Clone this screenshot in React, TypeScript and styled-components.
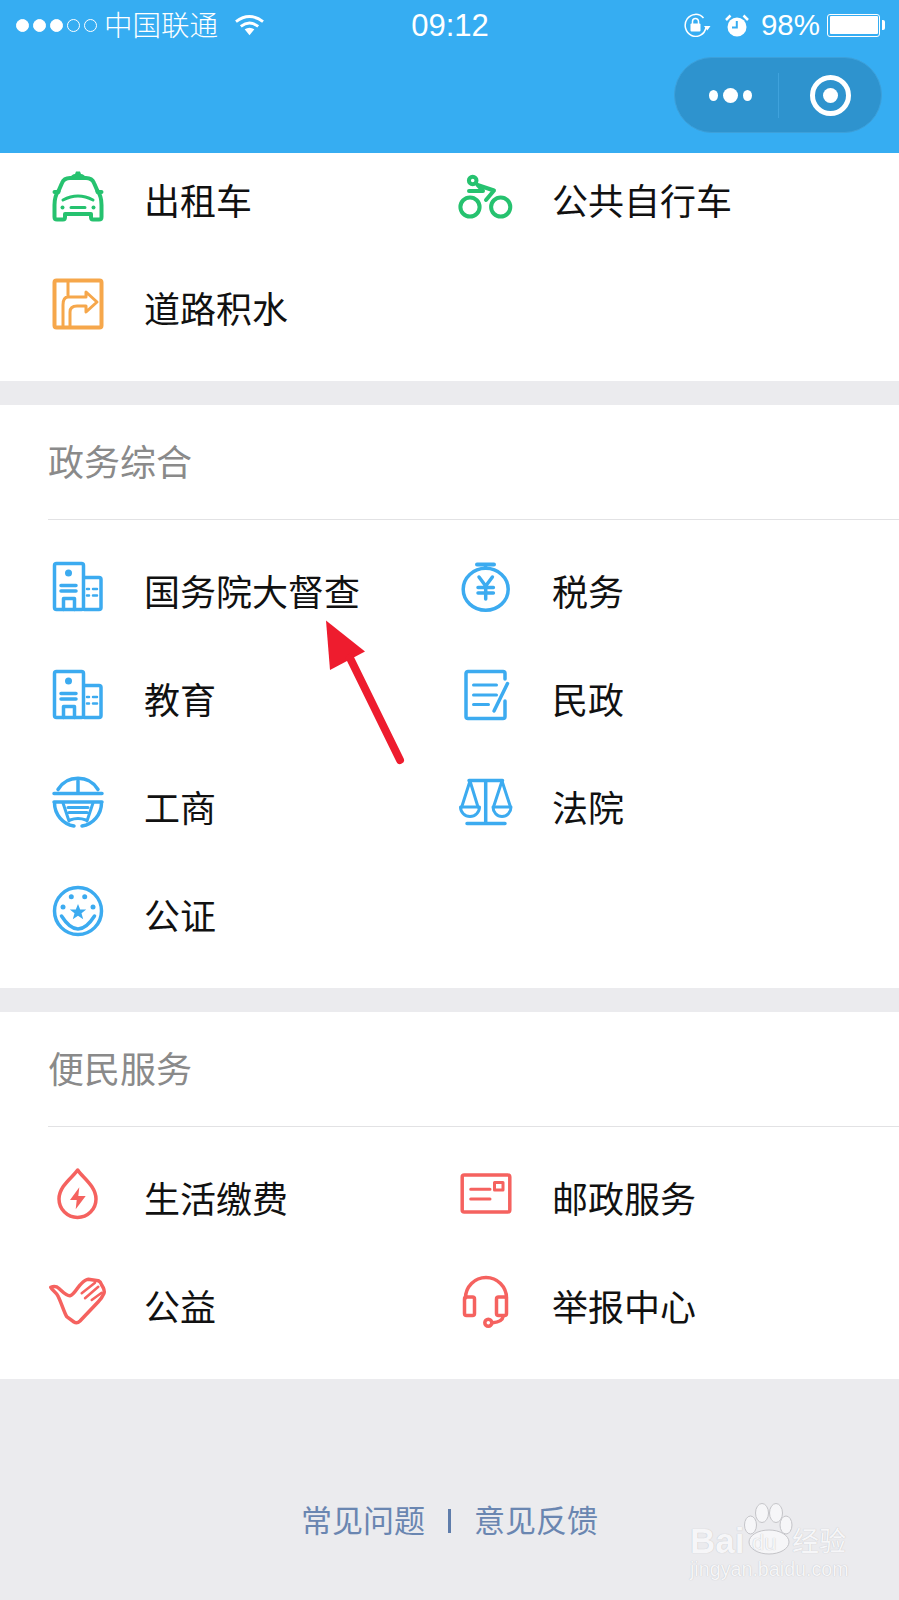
import React from "react";
import styled, { createGlobalStyle } from "styled-components";

const GlobalStyle = createGlobalStyle`
  html, body {
    margin: 0;
    padding: 0;
    background: #ebebee;
  }
`;

const cjk = `"Noto Sans CJK SC", "Liberation Sans", sans-serif`;

const Page = styled.div`
  position: relative;
  width: 899px;
  height: 1600px;
  overflow: hidden;
  background: #ebebee;
  font-family: ${cjk};
`;

const Header = styled.header`
  height: 153px;
  background: #36adf2;
  color: #fff;
  display: flex;
  flex-direction: column;
`;

const StatusBar = styled.div`
  height: 50px;
  padding: 0 19px 0 16px;
  display: grid;
  grid-template-columns: 1fr auto 1fr;
  align-items: center;
`;

const StatusLeft = styled.div`
  display: flex;
  align-items: center;
`;

const StatusRight = styled.div`
  display: flex;
  align-items: center;
  justify-content: flex-end;
`;

const SignalDot = styled.span<{ $on: boolean }>`
  width: 13px;
  height: 13px;
  margin-right: 4px;
  box-sizing: border-box;
  border-radius: 50%;
  border: 1px solid #fff;
  background: ${(p) => (p.$on ? "#fff" : "transparent")};
`;

const Carrier = styled.span`
  font-size: 28.5px;
  font-weight: 300;
  margin: -2px 17px 0 3px;
  line-height: 36px;
`;

const Clock = styled.span`
  font-family: "Liberation Sans", sans-serif;
  font-size: 31px;
  margin: 2px 0 0 4px;
`;

const LockSlot = styled.span`
  margin-right: 14px;
  display: flex;
`;

const Percent = styled.span`
  font-family: "Liberation Sans", sans-serif;
  font-size: 29.5px;
  margin: 0 7px 0 12px;
`;

const Battery = styled.span`
  width: 53px;
  height: 23px;
  box-sizing: border-box;
  border: 1.5px solid #fff;
  border-radius: 3px;
  padding: 1.5px;
  display: flex;
  position: relative;

  &::before {
    content: "";
    flex: 1;
    background: #fff;
    border-radius: 1px;
  }

  &::after {
    content: "";
    position: absolute;
    right: -6px;
    top: 5px;
    width: 3px;
    height: 10px;
    background: #fff;
    border-radius: 0 2px 2px 0;
  }
`;

const NavRow = styled.div`
  display: flex;
  justify-content: flex-end;
  padding: 7px 17px 0 0;
`;

const Capsule = styled.div`
  width: 208px;
  height: 76px;
  box-sizing: border-box;
  border-radius: 38px;
  background: #2e93ce;
  border: 1px solid #3da0da;
  display: flex;
  align-items: center;
`;

const MoreButton = styled.div`
  width: 103px;
  padding-left: 7px;
  box-sizing: border-box;
  display: flex;
  align-items: center;
  justify-content: center;
  gap: 5px;
`;

const MoreDot = styled.span<{ $big?: boolean }>`
  width: ${(p) => (p.$big ? 15 : 9)}px;
  height: ${(p) => (p.$big ? 15 : 11)}px;
  border-radius: 50%;
  background: #fff;
`;

const CapsuleDivider = styled.span`
  width: 1px;
  height: 45px;
  background: #3fa2dc;
`;

const CloseButton = styled.div`
  flex: 1;
  display: flex;
  justify-content: center;
  align-items: center;
`;

const CloseRing = styled.span`
  width: 41px;
  height: 41px;
  box-sizing: border-box;
  border: 5px solid #fff;
  border-radius: 50%;
  display: flex;
  align-items: center;
  justify-content: center;

  &::after {
    content: "";
    width: 15px;
    height: 15px;
    border-radius: 50%;
    background: #fff;
  }
`;

const Section = styled.section`
  background: #fff;
  overflow: hidden;
  padding-bottom: 18px;
  margin-bottom: 24px;
`;

const SectionTitle = styled.h2`
  margin: 0 0 0 48px;
  height: 110px;
  padding-bottom: 4px;
  border-bottom: 1px solid #e2e2e4;
  display: flex;
  align-items: center;
  font-size: 36px;
  font-weight: 400;
  color: #8a8a8a;
`;

const Grid = styled.div<{ $scrolled?: boolean }>`
  display: grid;
  grid-template-columns: 408px 1fr;
  grid-auto-rows: 108px;
  padding-left: 48px;
  margin-top: ${(p) => (p.$scrolled ? -6 : 18)}px;
`;

const Item = styled.div`
  display: flex;
  align-items: center;
`;

const IconBox = styled.span`
  width: 60px;
  height: 50px;
  margin: 0 36px 10px 0;
  display: flex;
  justify-content: center;
`;

const Icon = styled.svg<{ $color: string; $weight?: number }>`
  width: 50px;
  height: 50px;
  overflow: visible;
  fill: none;
  stroke: ${(p) => p.$color};
  color: ${(p) => p.$color};
  stroke-width: ${(p) => p.$weight ?? 3.5};
  stroke-linecap: round;
  stroke-linejoin: round;
`;

const Label = styled.span`
  font-size: 36px;
  color: #111;
  line-height: 48px;
  margin-bottom: 4px;
`;

const Footer = styled.footer`
  padding-top: 92px;
  display: flex;
  justify-content: center;
  align-items: center;
  gap: 23px;
`;

const FooterLink = styled.a`
  font-size: 31px;
  line-height: 48px;
  color: #6a86b1;
`;

const FooterBar = styled.span`
  width: 3px;
  height: 24px;
  margin-top: 3px;
  background: #5f7dab;
`;

const Arrow = styled.svg`
  position: absolute;
  left: 320px;
  top: 617px;
`;

const Watermark = styled.div`
  position: absolute;
  left: 690px;
  top: 1503px;
  width: 160px;
  height: 76px;
  color: #f6f6f8;
  text-shadow: 0 0 1px #b8b8bc;
`;

const Paw = styled.svg`
  position: absolute;
  left: 54px;
  top: 0;
`;

const LogoBai = styled.span`
  position: absolute;
  left: 0;
  top: 20px;
  font-family: "Liberation Sans", sans-serif;
  font-weight: 700;
  font-size: 35px;
  line-height: 36px;
`;

const LogoDu = styled.span`
  position: absolute;
  left: 62px;
  top: 28px;
  font-family: "Liberation Sans", sans-serif;
  font-size: 22px;
  line-height: 24px;
  color: #f6f6f8;
`;

const LogoCjk = styled.span`
  position: absolute;
  left: 102px;
  top: 18px;
  font-size: 27px;
  line-height: 38px;
  white-space: nowrap;
`;

const Domain = styled.div`
  position: absolute;
  left: 0;
  top: 54px;
  font-family: "Liberation Sans", sans-serif;
  font-size: 19.7px;
  line-height: 24px;
  white-space: nowrap;
`;

const GREEN = "#26c26f";
const ORANGE = "#f6a74b";
const BLUE = "#3cabf0";
const RED = "#f5625f";

const TaxiIcon = () => (
  <Icon $color={GREEN} $weight={4} viewBox="0 0 50 50">
    <path d="M17 6.5q2-3.5 5-3.5l1-2.5h4l1 2.5q3 0 5 3.5z" fill="currentColor" stroke="none" />
    <path d="M5.5 20 9 12q2-5 8-5h16q6 0 8 5l3.500 8" />
    <path d="M5.5 20Q1.500 25 1.500 34v12q0 2.500 2.500 2.500h6q2 0 2-2.500v-3h26v3q0 2.500 2 2.500h6q2.500 0 2.500-2.500V34q0-9-4-14" />
    <path d="M1.500 21H5.500M44.500 21h4" />
    <path d="M10 29Q25 21 40 29M18 36.500h14" strokeWidth="3" />
    <circle cx="9.500" cy="36.500" r="2" fill="currentColor" stroke="none" />
    <circle cx="40.500" cy="36.500" r="2" fill="currentColor" stroke="none" />
  </Icon>
);

const BikeIcon = () => (
  <Icon $color={GREEN} $weight={4} viewBox="0 0 50 50">
    <circle cx="9" cy="36" r="9.600" />
    <circle cx="39.700" cy="36" r="9.600" />
    <circle cx="11.700" cy="9.500" r="3.800" />
    <path d="M8 20H22L16.500 14 33 19.500 25 29" />
  </Icon>
);

const RoadIcon = () => (
  <Icon $color={ORANGE} $weight={4} viewBox="0 0 50 50">
    <rect x="1.500" y="1.500" width="47" height="47" rx="2" />
    <path d="M15 2V18H33M10 48V26Q10 18 15 18M17 48V33Q17 27 24 27H33M33 18V13L44 23 33 33V27" strokeWidth="3" />
  </Icon>
);

const BuildingIcon = () => (
  <Icon $color={BLUE} viewBox="0 0 50 50">
    <rect x="1.500" y="1.500" width="29" height="46" rx="2" />
    <path d="M31 15.500h15a2 2 0 0 1 2 2v28a2 2 0 0 1-2 2H31" />
    <circle cx="15.500" cy="11" r="3.500" fill="currentColor" stroke="none" />
    <path d="M8 23.500h15M8 29h15M10.500 47.500V36.500h11v11" />
    <path d="M34 27h2M40 27h4M34 33.500h2M40 33.500h4" strokeWidth="2.500" />
  </Icon>
);

const BureauIcon = () => (
  <Icon $color={BLUE} viewBox="0 0 50 50">
    <path d="M5 11.500A23.500 23.500 0 0 1 45 11.500M25 3v12M1 15.500h48" />
    <path d="M1 24h48M1.500 25A23.500 23.500 0 0 0 21 48M48.500 25A23.500 23.500 0 0 1 29 48" />
    <path d="M15 29.500h20M16 34.500h18M10 25l6 18M40 25l-6 18M17 42q8-3 16 0" strokeWidth="3" />
  </Icon>
);

const NotaryIcon = () => (
  <Icon $color={BLUE} viewBox="0 0 50 50">
    <circle cx="25" cy="25" r="23.500" />
    <path d="M25 18l2.200 5.500h6l-4.700 3.700 1.700 6L25 29.700l-5.200 3.500 1.700-6-4.700-3.700h6z" fill="currentColor" stroke="none" />
    <circle cx="18.300" cy="10.700" r="2.500" fill="currentColor" stroke="none" />
    <circle cx="31.700" cy="10.700" r="2.500" fill="currentColor" stroke="none" />
    <circle cx="10" cy="21" r="2.500" fill="currentColor" stroke="none" />
    <circle cx="40" cy="21" r="2.500" fill="currentColor" stroke="none" />
    <path d="M8.500 30Q25 56 41.500 30" />
  </Icon>
);

const TaxMoneyIcon = () => (
  <Icon $color={BLUE} viewBox="0 0 50 50">
    <path d="M16 2.500h17" strokeWidth="4" />
    <path d="M24.500 3v3" />
    <ellipse cx="24.700" cy="27.300" rx="22.500" ry="21" />
    <path d="M18 15l6.700 9 6.700-9M17 25.500h15.400M17 31h15.400M24.700 24v13" />
  </Icon>
);

const CivilIcon = () => (
  <Icon $color={BLUE} viewBox="0 0 50 50">
    <path d="M44 9V3.500a2 2 0 0 0-2-2H7a2 2 0 0 0-2 2V46.500a2 2 0 0 0 2 2H42a2 2 0 0 0 2-2V31" />
    <path d="M12.500 15h23M12.500 25h23M12.500 34.500h15" strokeWidth="3" />
    <path d="M46.500 13.500 33 41" />
  </Icon>
);

const ScaleIcon = () => (
  <Icon $color={BLUE} viewBox="0 0 50 50">
    <path d="M8 2.500h33.500M24.700 3v42M6 45.500h38" />
    <path d="M9 3 .7 29M9 3l8 26M41 3l-8.500 26M41 3l8.500 26" strokeWidth="3" />
    <path d="M-.5 29h19a9.500 9.500 0 0 1-19 0zM32 29h18a9 9.500 0 0 1-18 0z" strokeWidth="3" />
  </Icon>
);

const DropIcon = () => (
  <Icon $color={RED} viewBox="0 0 50 50">
    <path d="M24.700 1C20 8 6 17 6 30a18.500 18.500 0 0 0 37 0C43 17 29 8 24.700 1z" />
    <path d="M26.300 18.300 17 31h6.700l-1 9.300 10-13.300h-7.400z" fill="currentColor" stroke="none" />
  </Icon>
);

const HandIcon = () => (
  <Icon $color={RED} viewBox="0 0 50 50">
    <path d="M-2.300 10.300C1 9 4 9.700 6 11.500 10 15 13 19 17 18.700 21 18 24 11 27 8 30 5 32 2.500 35.300 2.300L45.300 3.700Q48 5 48.700 8 52 13 51 16.300 49 21 45.300 24.700L27 44Q24 47 21 45L13.700 39.700C11 35 8 25 5.300 19.700 3.500 15-.5 14-2.300 10.300z" />
    <path d="M28.700 16.300 42 5.700M32 21.300 45.300 9.700M38.700 23l10-7.300" strokeWidth="2.500" />
  </Icon>
);

const MailIcon = () => (
  <Icon $color={RED} viewBox="0 0 50 50">
    <rect x="1.200" y="5.900" width="47.600" height="37" rx="2" />
    <rect x="33.500" y="13.500" width="8.500" height="7.500" strokeWidth="3" />
    <path d="M9.700 20.300H29M9.700 30H29" strokeWidth="3" />
  </Icon>
);

const HeadsetIcon = () => (
  <Icon $color={RED} viewBox="0 0 50 50">
    <path d="M4.500 21a20.500 20.500 0 0 1 41 0" />
    <rect x="3.500" y="20" width="10" height="18.500" rx="2" />
    <rect x="35.500" y="20" width="10" height="18.500" rx="2" />
    <path d="M42.300 39q-1 6-10.600 6.700" />
    <circle cx="27.300" cy="45.700" r="3.500" />
  </Icon>
);

const WifiIcon = () => (
  <svg width="29" height="22" viewBox="0 0 30 22">
    <path d="M1 7.500Q15-3 29 7.500" fill="none" stroke="#fff" strokeWidth="3" />
    <path d="M6 12.500Q15 5.500 24 12.500" fill="none" stroke="#fff" strokeWidth="3" />
    <path d="M15 21.500 10 15.500Q15 12 20 15.500z" fill="#fff" />
  </svg>
);

const RotationLockIcon = () => (
  <svg width="28" height="24" viewBox="0 0 28 24">
    <path d="M23 14.500A10.500 11 0 1 1 20.500 5" fill="none" stroke="#fff" strokeWidth="1.500" />
    <path d="M21 13h6.500l-3.200 4.500z" fill="#fff" />
    <rect x="7.500" y="10.500" width="10" height="8" rx="1" fill="#fff" />
    <path d="M9.500 11V8.500a3 3 0 0 1 6 0V11" fill="none" stroke="#fff" strokeWidth="1.500" />
  </svg>
);

const AlarmIcon = () => (
  <svg width="24" height="23" viewBox="0 0 24 23">
    <circle cx="12" cy="13" r="9.500" fill="#fff" />
    <path d="M11.800 7v6.500H7" fill="none" stroke="#36adf2" strokeWidth="2" />
    <path d="M1 6 5.500 1.500M23 6 18.500 1.500" stroke="#fff" strokeWidth="2.500" />
  </svg>
);

const PawMark = () => (
  <Paw width="50" height="52" viewBox="0 0 50 52">
    <g fill="#f6f6f8" stroke="#c4c4c8" strokeWidth="1">
      <ellipse cx="6.500" cy="22" rx="6" ry="9" />
      <ellipse cx="18" cy="10" rx="6.500" ry="9.500" />
      <ellipse cx="32" cy="10" rx="6.500" ry="9.500" />
      <ellipse cx="42" cy="22" rx="6" ry="9" />
      <ellipse cx="25" cy="39" rx="20" ry="12" />
    </g>
  </Paw>
);

type Entry = { icon: React.ReactNode; label: string };

const transport: Array<Entry> = [
  { icon: <TaxiIcon />, label: "出租车" },
  { icon: <BikeIcon />, label: "公共自行车" },
  { icon: <RoadIcon />, label: "道路积水" },
];

const government: Array<Entry> = [
  { icon: <BuildingIcon />, label: "国务院大督查" },
  { icon: <TaxMoneyIcon />, label: "税务" },
  { icon: <BuildingIcon />, label: "教育" },
  { icon: <CivilIcon />, label: "民政" },
  { icon: <BureauIcon />, label: "工商" },
  { icon: <ScaleIcon />, label: "法院" },
  { icon: <NotaryIcon />, label: "公证" },
];

const services: Array<Entry> = [
  { icon: <DropIcon />, label: "生活缴费" },
  { icon: <MailIcon />, label: "邮政服务" },
  { icon: <HandIcon />, label: "公益" },
  { icon: <HeadsetIcon />, label: "举报中心" },
];

const Items: React.FC<{ entries: Array<Entry>; scrolled?: boolean }> = ({ entries, scrolled }) => (
  <Grid $scrolled={scrolled}>
    {entries.map((entry) => (
      <Item key={entry.label}>
        <IconBox>{entry.icon}</IconBox>
        <Label>{entry.label}</Label>
      </Item>
    ))}
  </Grid>
);

export default function App() {
  return (
    <Page>
      <GlobalStyle />
      <Header>
        <StatusBar>
          <StatusLeft>
            {[true, true, true, false, false].map((on, i) => (
              <SignalDot key={i} $on={on} />
            ))}
            <Carrier>中国联通</Carrier>
            <WifiIcon />
          </StatusLeft>
          <Clock>09:12</Clock>
          <StatusRight>
            <LockSlot>
              <RotationLockIcon />
            </LockSlot>
            <AlarmIcon />
            <Percent>98%</Percent>
            <Battery />
          </StatusRight>
        </StatusBar>
        <NavRow>
          <Capsule>
            <MoreButton>
              <MoreDot />
              <MoreDot $big />
              <MoreDot />
            </MoreButton>
            <CapsuleDivider />
            <CloseButton>
              <CloseRing />
            </CloseButton>
          </Capsule>
        </NavRow>
      </Header>

      <Section>
        <Items entries={transport} scrolled />
      </Section>

      <Section>
        <SectionTitle>政务综合</SectionTitle>
        <Items entries={government} />
      </Section>

      <Section>
        <SectionTitle>便民服务</SectionTitle>
        <Items entries={services} />
      </Section>

      <Footer>
        <FooterLink>常见问题</FooterLink>
        <FooterBar />
        <FooterLink>意见反馈</FooterLink>
      </Footer>

      <Arrow width="90" height="150" viewBox="0 0 90 150">
        <path d="M6 3.500 45 34.500 10 53z" fill="#ee1c2e" />
        <path d="M30 41 80 143" stroke="#ee1c2e" strokeWidth="8" strokeLinecap="round" fill="none" />
      </Arrow>

      <Watermark>
        <PawMark />
        <LogoBai>Bai</LogoBai>
        <LogoDu>du</LogoDu>
        <LogoCjk>经验</LogoCjk>
        <Domain>jingyan.baidu.com</Domain>
      </Watermark>
    </Page>
  );
}
